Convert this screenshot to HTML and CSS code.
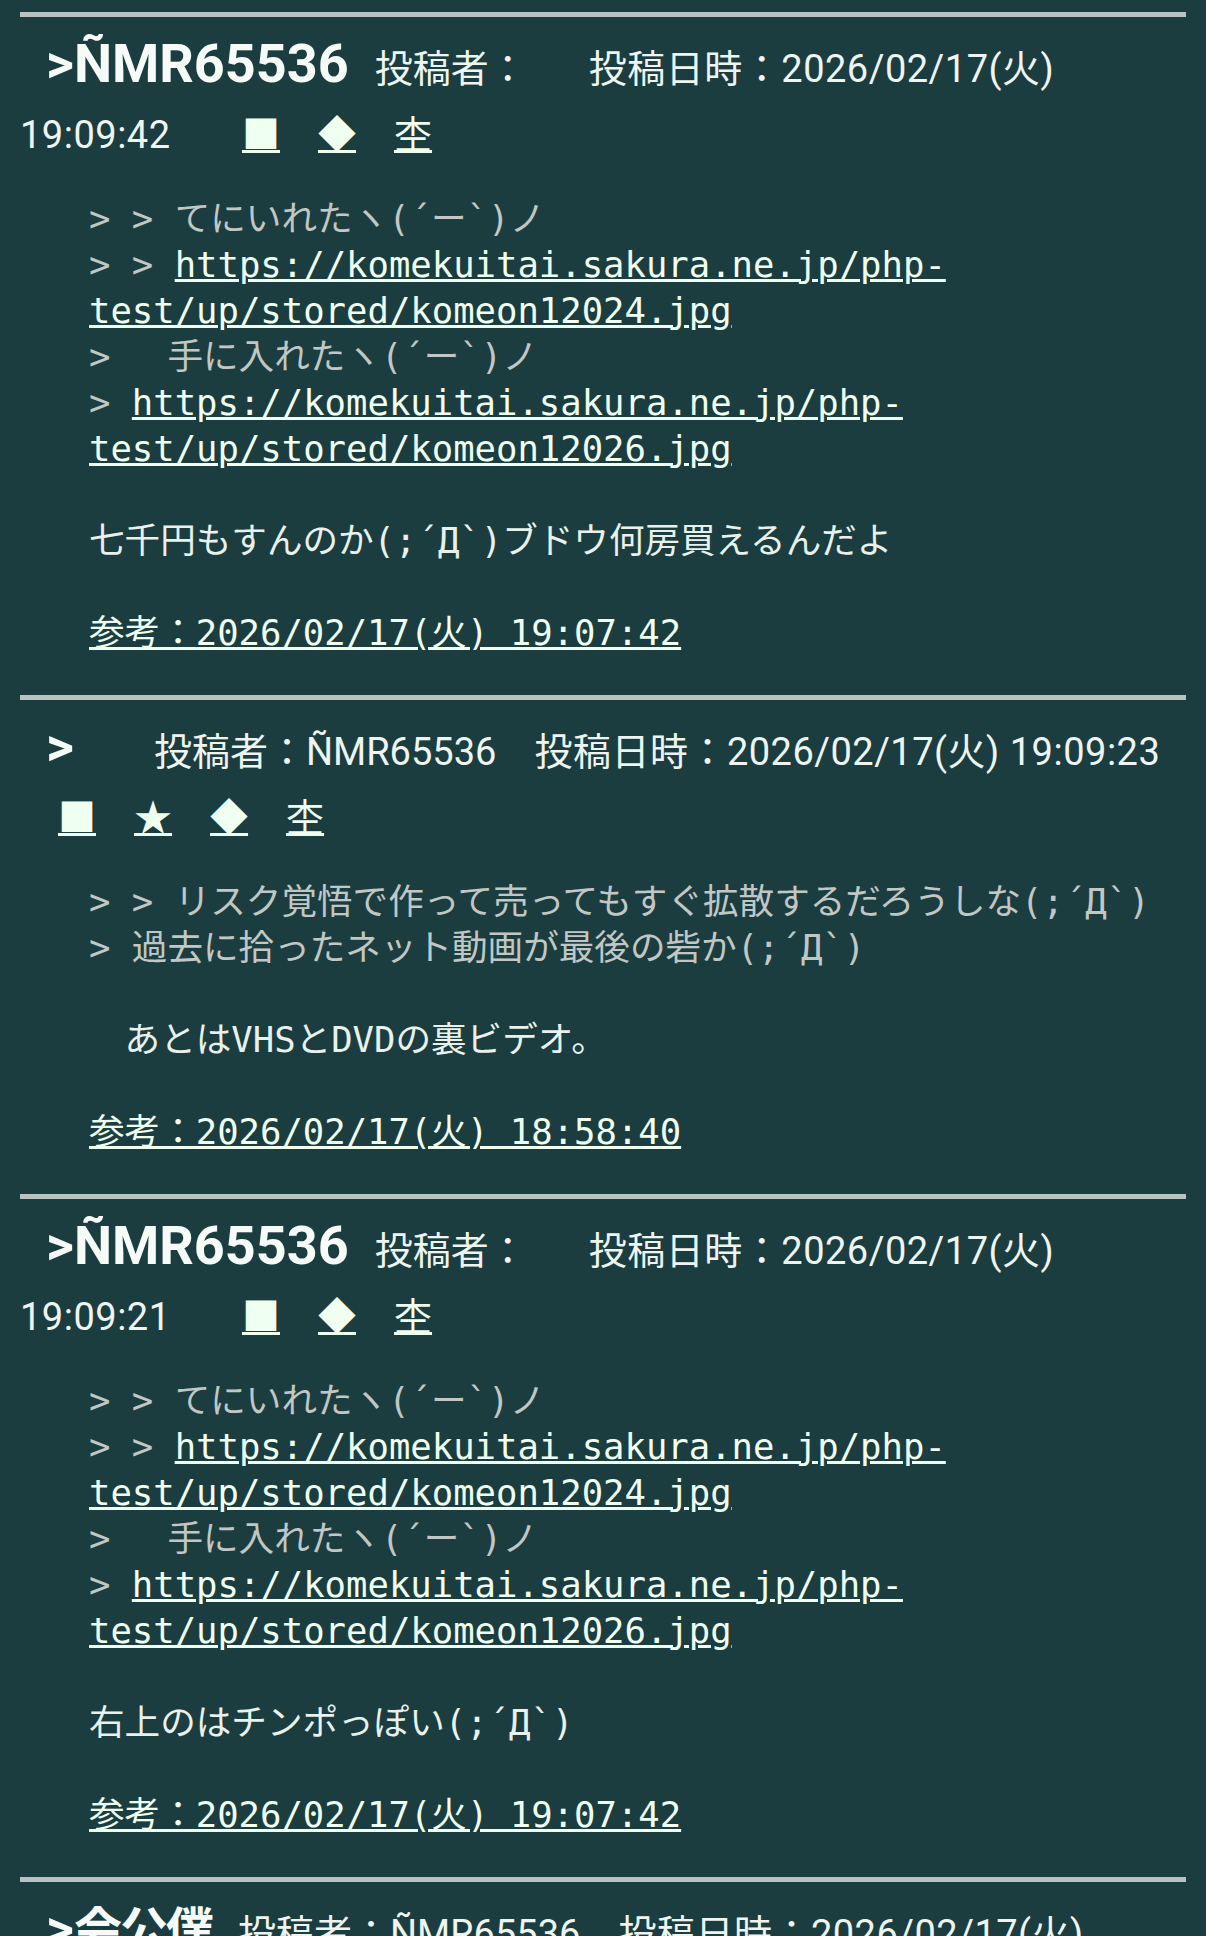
FILE: index.html
```html
<!DOCTYPE html>
<html lang="ja">
<head>
<meta charset="utf-8">
<title>スレッド</title>
<link rel="stylesheet" href="styles.css">
</head>
<body>
<main class="thread">

  <article class="post">
    <hr class="sep">
    <div class="head"><span class="title">&gt;<span class="name">ÑMR65536</span></span><span class="author">投稿者：<span class="who"></span></span><span class="date">投稿日時：2026/02/17(火) 19:09:42</span> <a class="mk" href="#">■</a><a class="mk" href="#">◆</a><a class="mk" href="#">杢</a></div>
    <div class="body">
      <span class="q">&gt; &gt; てにいれたヽ(´ー`)ノ</span><br>
      <span class="q">&gt; &gt; </span><a href="#">https://komekuitai.sakura.ne.jp/php-test/up/stored/komeon12024.jpg</a><br>
      <span class="q">&gt; 　手に入れたヽ(´ー`)ノ</span><br>
      <span class="q">&gt; </span><a href="#">https://komekuitai.sakura.ne.jp/php-test/up/stored/komeon12026.jpg</a><br>
      <br>
      七千円もすんのか(;´Д`)ブドウ何房買えるんだよ<br>
      <br>
      <a href="#">参考：2026/02/17(火) 19:07:42</a>
    </div>
  </article>

  <article class="post">
    <hr class="sep">
    <div class="head"><span class="title">&gt;<span class="name"></span></span><span class="author">投稿者：<span class="who">ÑMR65536</span></span><span class="date">投稿日時：2026/02/17(火) 19:09:23</span> <a class="mk" href="#">■</a><a class="mk" href="#">★</a><a class="mk" href="#">◆</a><a class="mk" href="#">杢</a></div>
    <div class="body">
      <span class="q">&gt; &gt; リスク覚悟で作って売ってもすぐ拡散するだろうしな(;´Д`)</span><br>
      <span class="q">&gt; 過去に拾ったネット動画が最後の砦か(;´Д`)</span><br>
      <br>
      　あとはVHSとDVDの裏ビデオ。<br>
      <br>
      <a href="#">参考：2026/02/17(火) 18:58:40</a>
    </div>
  </article>

  <article class="post">
    <hr class="sep">
    <div class="head"><span class="title">&gt;<span class="name">ÑMR65536</span></span><span class="author">投稿者：<span class="who"></span></span><span class="date">投稿日時：2026/02/17(火) 19:09:21</span> <a class="mk" href="#">■</a><a class="mk" href="#">◆</a><a class="mk" href="#">杢</a></div>
    <div class="body">
      <span class="q">&gt; &gt; てにいれたヽ(´ー`)ノ</span><br>
      <span class="q">&gt; &gt; </span><a href="#">https://komekuitai.sakura.ne.jp/php-test/up/stored/komeon12024.jpg</a><br>
      <span class="q">&gt; 　手に入れたヽ(´ー`)ノ</span><br>
      <span class="q">&gt; </span><a href="#">https://komekuitai.sakura.ne.jp/php-test/up/stored/komeon12026.jpg</a><br>
      <br>
      右上のはチンポっぽい(;´Д`)<br>
      <br>
      <a href="#">参考：2026/02/17(火) 19:07:42</a>
    </div>
  </article>

  <article class="post">
    <hr class="sep">
    <div class="head"><span class="title">&gt;<span class="name cjk">会公僕</span></span><span class="author">投稿者：<span class="who">ÑMR65536</span></span><span class="date">投稿日時：2026/02/17(火) 19:08:55</span> <a class="mk" href="#">■</a><a class="mk" href="#">◆</a><a class="mk" href="#">杢</a></div>
  </article>

</main>
</body>
</html>
```

FILE: styles.css
```css
html, body {
  margin: 0;
  padding: 0;
  background: #1c3d40;
}

.thread {
  padding-top: 12px;
}

.sep {
  display: block;
  height: 5px;
  margin: 0 20px;
  border: 0;
  background: #b9c1c1;
}

.head {
  margin-top: 19px;
  padding: 0 8px 0 20px;
  font-family: Roboto, "Noto Sans CJK JP", sans-serif;
  font-size: 38px;
  line-height: 66px;
  color: #eef5f0;
}

.title {
  margin-left: 26px;
  font-size: 54px;
  font-weight: bold;
  line-height: 40px;
  color: #f6fbf7;
}

.name:empty {
  display: inline-block;
  width: 54px;
}

.name.cjk {
  font-size: 48px;
  letter-spacing: -2px;
}

.author {
  margin-left: 26px;
}

.who:empty {
  display: inline-block;
  width: 24px;
}

.date {
  margin-left: 38px;
  padding-right: 24px;
  letter-spacing: 0.5px;
}

.mk {
  margin-left: 38px;
  font-family: "Noto Sans CJK JP", sans-serif;
  line-height: 50px;
  color: #effff0;
  text-decoration: underline;
  text-decoration-thickness: 3px;
}

.body {
  margin: 28px 20px 39px 89px;
  font-family: "DejaVu Sans Mono", "Noto Sans CJK JP", monospace;
  font-size: 35.6px;
  line-height: 46px;
  color: #e8f1eb;
}

.body a {
  color: #effff0;
  text-decoration: underline;
  text-decoration-thickness: 3px;
}

.q {
  color: #c0c7c5;
}
```
